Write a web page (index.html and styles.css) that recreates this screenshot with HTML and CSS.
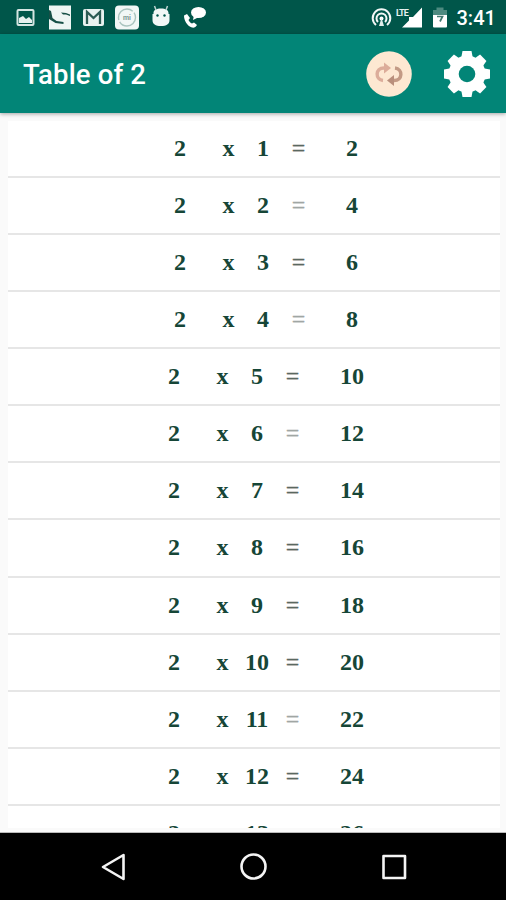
FILE: index.html
```
<!DOCTYPE html>
<html>
<head>
<meta charset="utf-8">
<title>Table of 2</title>
<link rel="stylesheet" href="styles.css">
</head>
<body>

<div class="status">
  <svg class="notifications" width="220" height="34" viewBox="0 0 220 34">
    <!-- picture -->
    <rect x="17.500" y="10" width="16" height="15" rx="1" fill="none" stroke="#d5e5e2" stroke-width="2"/>
    <path d="M19 23v-5l4-2 3 3 3-2 3 3v3z" fill="#e6f0ee"/>
    <!-- S -->
    <rect x="49" y="5.500" width="22" height="24" fill="#eef5f3"/>
    <path d="M49 10l2 1 1.500 7 4 3 7 1v2l-8-1-6.500-4z" fill="#174f46"/>
    <path d="M61 12.500l5 .5 4 1.500v1.500l-4-1.500h-3z" fill="#174f46"/>
    <!-- mail -->
    <rect x="83" y="9" width="21" height="17" rx="2" fill="#e9f2f0"/>
    <path d="M87 24V12l6.500 6 6.500-6v12" fill="none" stroke="#2c5c54" stroke-width="2.300"/>
    <!-- mi -->
    <rect x="115" y="5.500" width="24" height="24" rx="4" fill="#f2f7f6"/>
    <circle cx="127" cy="17.500" r="8.500" fill="none" stroke="#aac4bf" stroke-width="1.400" stroke-dasharray="22 2"/>
    <text x="127" y="19.500" class="mi">mi</text>
    <!-- droid -->
    <path d="M152.500 14h17v6c0 4-3 6-8.500 6s-8.500-2-8.500-6zM153.500 13c0-3 3-4.500 7.500-4.500s7.500 1.500 7.500 4.500v2h-15z" fill="#f2f8f7"/>
    <path d="M156 10l-1.500-4M166 10l1.500-4" stroke="#bcd3cf" stroke-width="1.500"/>
    <circle cx="157.500" cy="15.500" r="1.200" fill="#00564a"/>
    <circle cx="164.500" cy="15.500" r="1.200" fill="#00564a"/>
    <!-- call -->
    <ellipse cx="198.500" cy="12.500" rx="7.500" ry="5.500" fill="#fff"/>
    <path d="M194 15l-1 5 6-3z" fill="#fff"/>
    <path d="M184 15.500l3-1.500 3 4-1.500 2c1 2 2 3 3.500 3.500l2-1 3 2.500c-1 2-3 3-5 2.500-5-1.500-8-7-8-12z" fill="#fff"/>
  </svg>
  <svg class="signals" width="84" height="34" viewBox="368 0 84 34">
    <g fill="none" stroke="#f2f8f7" stroke-width="2">
      <path d="M376 25a8.800 8.800 0 1 1 11 0"/>
      <path d="M378 22a5 5 0 1 1 7 0"/>
    </g>
    <circle cx="381.500" cy="18.500" r="2" fill="#fff"/>
    <path d="M381.500 18l-2.500 8h5z" fill="#e0eeeb"/>
    <path d="M422 7.500v20h-20l7-7V17h4z" fill="#fff"/>
    <text x="396" y="15.500" class="lte">LTE</text>
    <path d="M433 10h3.500V7.500h7V10h3.500v5h-14z" fill="#4d8a80"/>
    <path d="M433 15h14v11.500q0 1-1 1h-12q-1 0-1-1z" fill="#fff"/>
    <path d="M437 16.500h5.500l-2.500 5" fill="none" stroke="#41786f" stroke-width="1.700"/>
  </svg>
  <span class="clock">3:41</span>
</div>

<div class="toolbar">
  <h1>Table of 2</h1>
  <svg class="repeat" width="46" height="46" viewBox="0 0 46 46">
    <circle cx="23" cy="23" r="22.800" fill="#fde8d2"/>
    <g fill="none" stroke-width="3.400">
      <path d="M17 29.500c-8-1-8-12.500 1-12.500h2" stroke="#dcac9a"/>
      <path d="M29 17c8 1 8 12.500-1 12.500h-2" stroke="#c39a85"/>
    </g>
    <path d="M18 11.500l7 5.500-7 5.500z" fill="#dcac9a"/>
    <path d="M28 24l-7 5.500 7 5.500z" fill="#b98f7c"/>
  </svg>
  <svg class="gear" width="48" height="48" viewBox="-24 -24 48 48">
    <g fill="#fff">
      <path id="tooth" d="M-6-15l1.500-8h9l1.500 8V15l-1.500 8h-9L-6 15z"/>
      <use href="#tooth" transform="rotate(45)"/>
      <use href="#tooth" transform="rotate(90)"/>
      <use href="#tooth" transform="rotate(135)"/>
      <circle r="18.500"/>
    </g>
    <circle r="8.300" fill="#028577"/>
  </svg>
</div>

<div class="content">
  <div class="list" id="list"></div>
</div>

<div class="navbar">
  <svg width="506" height="67" viewBox="0 0 506 67" fill="none" stroke="#f4f4f4" stroke-width="2.600" stroke-linejoin="round">
    <path d="M123.500 22v24L103 34z"/>
    <circle cx="253.500" cy="33.500" r="12"/>
    <rect x="383.500" y="23" width="21.500" height="22"/>
  </svg>
</div>

<script src="table.js"></script>
</body>
</html>
```
FILE: styles.css
```
body {
  margin: 0;
  width: 506px;
  height: 900px;
  overflow: hidden;
  display: flex;
  flex-direction: column;
  background-color: #fafafa;
  font-family: Roboto, sans-serif;
}

.status {
  height: 34px;
  flex: none;
  display: flex;
  align-items: center;
  background-color: #00564a;
  color: white;
}

.signals {
  margin-left: 148px;
}

.clock {
  margin-left: 4.5px;
  font-size: 20px;
  font-weight: 500;
  line-height: 34px;
  padding-top: 2px;
}

.mi {
  font-size: 7px;
  font-weight: bold;
  fill: #7d9993;
  text-anchor: middle;
}

.lte {
  font-size: 9px;
  font-weight: bold;
  letter-spacing: -0.8px;
  fill: #e8f2f0;
}

.toolbar {
  height: 79px;
  flex: none;
  display: flex;
  align-items: center;
  box-sizing: border-box;
  padding: 0 15px 0 23px;
  background-color: #028577;
  box-shadow: 0 1px 4px rgba(0, 0, 0, 0.35);
  color: white;
  z-index: 1;
}

.toolbar h1 {
  margin: 0;
  flex: 1;
  padding-top: 2px;
  font-size: 27.5px;
  font-weight: 500;
  letter-spacing: 0.15px;
}

.gear {
  margin-left: 31px;
}

.content {
  flex: 1;
  min-height: 0;
  box-sizing: border-box;
  padding: 7.5px 6px 4.5px 8px;
  border-bottom: 1px solid #bbb;
}

.list {
  height: 100%;
  overflow: hidden;
  background-color: white;
}

.row {
  height: 57.15px;
  box-sizing: border-box;
  display: flex;
  justify-content: center;
  padding-left: 24px;
  border-bottom: 2px solid #e6e6e6;
  font-family: "Liberation Serif", serif;
  font-size: 24px;
  font-weight: bold;
  line-height: 54px;
  color: #164637;
  text-align: center;
}

.times {
  width: 12px;
  margin-left: 36.5px;
}

.number {
  width: 24px;
  margin-left: 16.5px;
}

.equals {
  width: 14px;
  margin-left: 16.5px;
  font-weight: normal;
  color: #5a6860;
  -webkit-text-stroke: 0.3px;
}

.light .equals {
  color: #a0a6a3;
}

.result {
  margin-left: 40.5px;
}

.navbar {
  height: 67px;
  flex: none;
  background-color: black;
}
```
FILE: table.js
```
var table = 2
var list = document.getElementById("list")
var light = [2, 4, 6, 11] // rows with a paler equals sign

for (var i = 1; i <= 13; i++) {
  var row = document.createElement("div")
  row.className = light.includes(i) ? "row light" : "row"
  row.innerHTML = "<span>" + table + "</span>" +
    "<span class='times'>x</span>" +
    "<span class='number'>" + i + "</span>" +
    "<span class='equals'>=</span>" +
    "<span class='result'>" + table * i + "</span>"
  list.appendChild(row)
}
```
